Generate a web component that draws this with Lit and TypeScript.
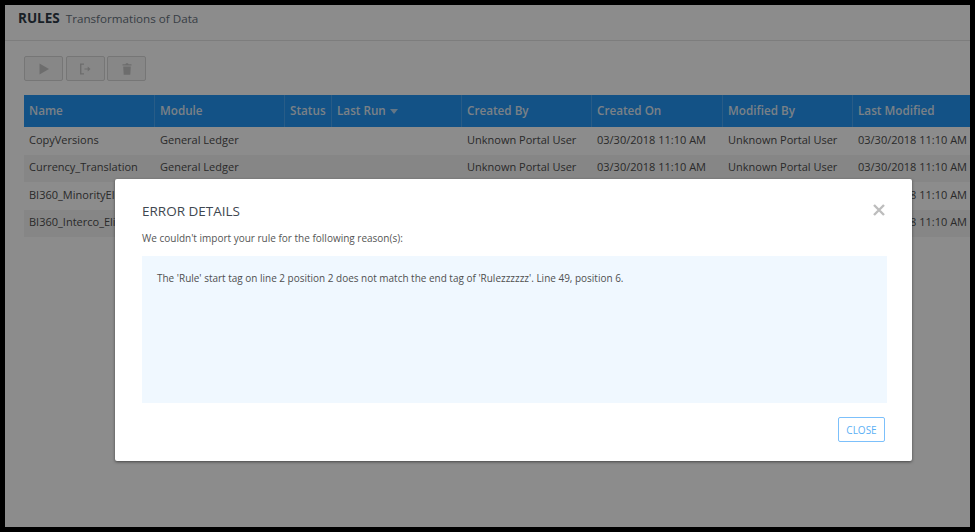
import { LitElement, html, css } from "lit";
import { customElement } from "lit/decorators.js";

const columns = [
  { label: "Name", width: 131 },
  { label: "Module", width: 130 },
  { label: "Status", width: 47 },
  { label: "Last Run", width: 130, sort: true },
  { label: "Created By", width: 130 },
  { label: "Created On", width: 131 },
  { label: "Modified By", width: 130 },
  { label: "Last Modified", width: 131 },
];
const stamp = "03/30/2018 11:10 AM";
const user = "Unknown Portal User";
const rows = [
  ["CopyVersions", "General Ledger"],
  ["Currency_Translation", "General Ledger"],
  ["BI360_MinorityElimination", "General Ledger"],
  ["BI360_Interco_Elimination", "General Ledger"],
];
const template = columns.map((c) => c.width + "px").join(" ");

@customElement("app-root")
export class AppRoot extends LitElement {
  static styles = css`
    :host {
      display: block;
      width: 975px;
      height: 532px;
      overflow: hidden;
      font-family: "Open Sans", "Liberation Sans", sans-serif;
    }
    * { box-sizing: border-box; }
    .frame {
      width: 975px;
      height: 532px;
      background: #000;
      padding: 5px;
    }
    .screen {
      position: relative;
      width: 965px;
      height: 522px;
      background: #fff;
      overflow: hidden;
    }
    .title {
      height: 36px;
      border-bottom: 1px solid #e4e4e4;
      padding: 4px 0 0 13px;
      display: flex;
      align-items: baseline;
      gap: 6px;
    }
    .title b { font-size: 13.5px; font-weight: 700; color: #2f3b47; line-height: 18px; }
    .title span { font-size: 11.65px; color: #66717c; line-height: 18px; }
    .toolbar {
      display: flex;
      gap: 2.5px;
      padding: 15px 0 0 19px;
      height: 54px;
    }
    .tool {
      width: 39px;
      height: 25px;
      border: 1px solid #d8d8d8;
      border-radius: 2px;
      background: #f6f6f6;
      display: flex;
      align-items: center;
      justify-content: center;
    }
    .tool svg { width: 14px; height: 14px; fill: #c6c6c6; }
    .table { margin-left: 19px; width: 990px; }
    .row {
      display: grid;
      height: 27.5px;
      align-items: center;
      padding-bottom: 3px;
      font-size: 11px;
      color: #4d4d4d;
    }
    .row.alt { background: #f5f5f5; }
    .row.head {
      height: 32px;
      padding-bottom: 0;
      background: #2395f5;
      color: #dfeaf4;
      font-size: 11.7px;
      font-weight: 600;
    }
    .cell {
      padding-left: 5px;
      white-space: nowrap;
      overflow: hidden;
      min-width: 0;
    }
    .head .cell {
      height: 32px;
      line-height: 31px;
      border-right: 1px solid #4aa8f6;
    }
    .caret {
      display: inline-block;
      width: 0;
      height: 0;
      margin-left: 4px;
      vertical-align: 1px;
      border-left: 4px solid transparent;
      border-right: 4px solid transparent;
      border-top: 5px solid #b5d8f5;
    }
    .veil {
      position: absolute;
      inset: 0;
      background: rgba(0, 0, 0, 0.45);
    }
    .modal {
      position: absolute;
      left: 110px;
      top: 174px;
      width: 797px;
      height: 282px;
      background: #fff;
      border-radius: 2px;
      box-shadow: 0 1px 3px rgba(0, 0, 0, 0.5);
      padding: 23px 25px 0 27px;
      display: flex;
      flex-direction: column;
    }
    .modal h2 {
      margin: 0;
      font-size: 13.5px;
      font-weight: 400;
      line-height: 18px;
      color: #3f4750;
    }
    .modal-x {
      position: absolute;
      right: 27px;
      top: 25px;
      width: 12px;
      height: 12px;
    }
    .modal p {
      margin: 11px 0 0 0;
      font-size: 10px;
      line-height: 14px;
      color: #555;
    }
    .detail {
      margin-top: 11px;
      height: 147px;
      background: #f0f8ff;
      padding: 15px;
      font-size: 9.98px;
      line-height: 14px;
      color: #4f4f4f;
    }
    .foot {
      display: flex;
      justify-content: flex-end;
      padding: 14px 2px 0 0;
    }
    .close {
      width: 47px;
      height: 25px;
      border: 1.5px solid #7cc0fb;
      border-radius: 2px;
      background: #fff;
      color: #5cb0f5;
      font-family: inherit;
      font-size: 10px;
      padding: 0;
    }
  `;

  render() {
    return html`
      <div class="frame">
        <div class="screen">
          <div class="title"><b>RULES</b><span>Transformations of Data</span></div>
          <div class="toolbar">
            <div class="tool">
              <svg viewBox="0 0 14 14"><path d="M2.500 1.500 12 7l-9.500 5.500z" /></svg>
            </div>
            <div class="tool">
              <svg viewBox="0 0 14 14">
                <path d="M2 1.500h4v1.300H3.400v8.400H6v1.300H2z" />
                <path d="M6.500 6.400h3.200V4.600L12.500 7 9.700 9.400V7.600H6.500z" />
              </svg>
            </div>
            <div class="tool">
              <svg viewBox="0 0 14 14">
                <path d="M2.500 2.200h3l.5-1h2l.5 1h3v1.300h-9zM3.200 4.400h7.600l-.5 8.400H3.700z" />
              </svg>
            </div>
          </div>
          <div class="table">
            <div class="row head" style="grid-template-columns:${template}">
              ${columns.map(
                (c) => html`<div class="cell">${c.label}${c.sort ? html`<span class="caret"></span>` : ""}</div>`
              )}
            </div>
            ${rows.map(
              (r, i) => html`
                <div class="row ${i % 2 ? "alt" : ""}" style="grid-template-columns:${template}">
                  <div class="cell">${r[0]}</div>
                  <div class="cell">${r[1]}</div>
                  <div class="cell"></div>
                  <div class="cell"></div>
                  <div class="cell">${user}</div>
                  <div class="cell">${stamp}</div>
                  <div class="cell">${user}</div>
                  <div class="cell">${stamp}</div>
                </div>
              `
            )}
          </div>
          <div class="veil"></div>
          <div class="modal">
            <h2>ERROR DETAILS</h2>
            <svg class="modal-x" viewBox="0 0 12 12">
              <path d="M1 1l10 10M11 1 1 11" stroke="#bdbdbd" stroke-width="2.400" fill="none" />
            </svg>
            <p>We couldn't import your rule for the following reason(s):</p>
            <div class="detail">
              The 'Rule' start tag on line 2 position 2 does not match the end tag of 'Rulezzzzzz'. Line 49, position 6.
            </div>
            <div class="foot"><button class="close">CLOSE</button></div>
          </div>
        </div>
      </div>
    `;
  }
}
